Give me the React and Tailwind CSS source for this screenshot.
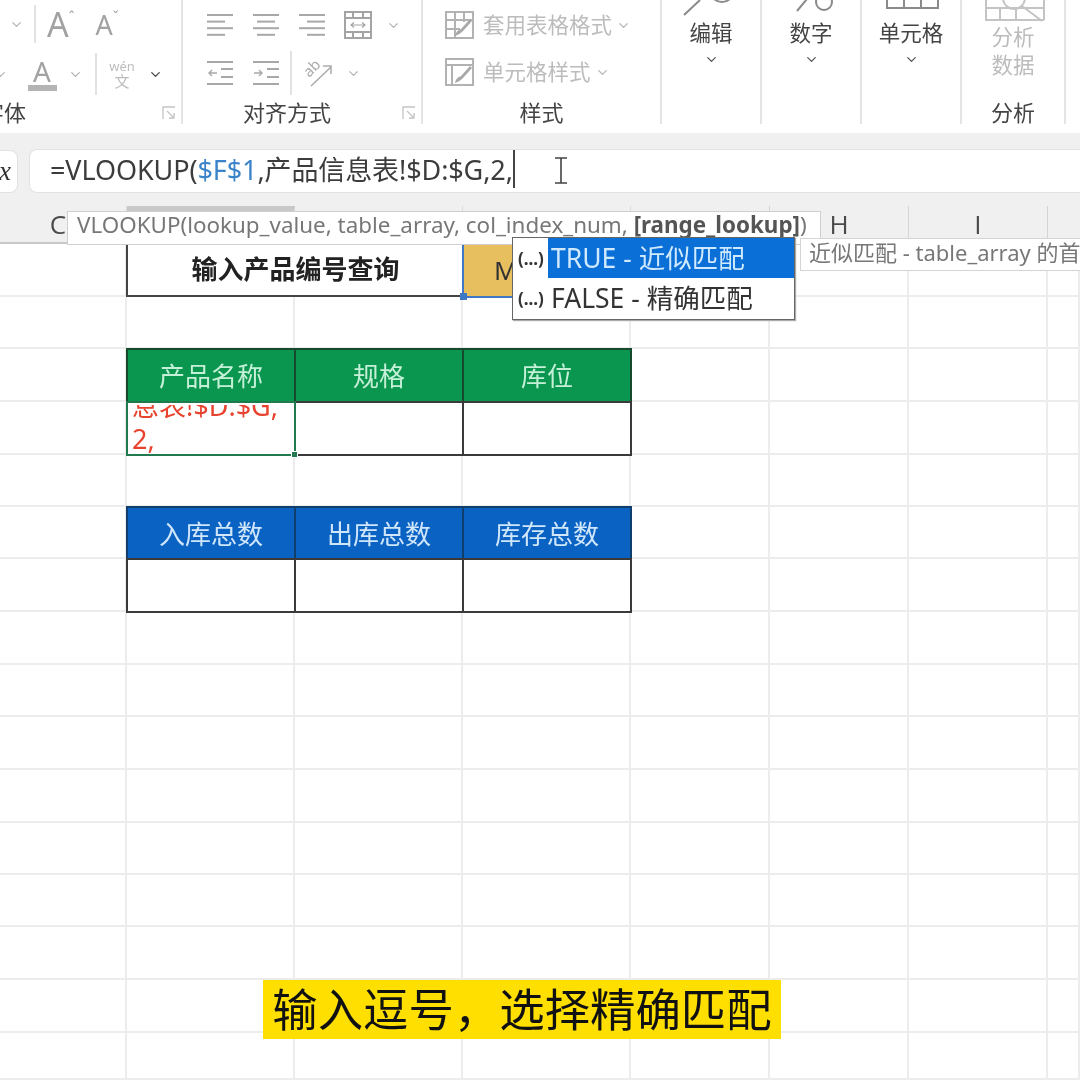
import { ChevronDown } from 'lucide-react'

// Excel window cropped mid-formula: ribbon, formula bar, sheet grid and autocomplete popups.

const GRID_COLS = 'grid grid-cols-[127px_168px_168px_168px_139px_139px_139px_32px]'

function Chev({ className = 'text-[#b4b4b4]', size = 15 }) {
  return <ChevronDown size={size} strokeWidth={2} className={`shrink-0 ${className}`} />
}

function Sep({ className = '' }) {
  return <div className={`w-[2px] shrink-0 bg-[#e2e2e2] ${className}`} />
}

function AlignIcon({ align }) {
  const rows = [26, 18, 26, 18]
  return (
    <svg width="26" height="24" viewBox="0 0 26 24" className="shrink-0">
      {rows.map((w, i) => {
        const x = align === 'left' ? 0 : align === 'right' ? 26 - w : (26 - w) / 2
        return <rect key={i} x={x} y={1 + i * 6.6} width={w} height="2" fill="#a8a8a8" />
      })}
    </svg>
  )
}

function IndentIcon({ flip }) {
  return (
    <svg width="26" height="26" viewBox="0 0 26 26" className="shrink-0" fill="none" stroke="#a8a8a8" strokeWidth="2">
      <path d="M0 2h26M0 24h26M14 9h12M14 17h12" />
      {flip ? <path d="M1 13h8M6 10l3 3-3 3" strokeWidth="1.4" /> : <path d="M10 13H2M5 10l-3 3 3 3" strokeWidth="1.4" />}
    </svg>
  )
}

function MergeIcon() {
  return (
    <svg width="28" height="28" viewBox="0 0 28 28" className="shrink-0" fill="none" stroke="#a4a4a4" strokeWidth="2">
      <rect x="1" y="1" width="26" height="26" />
      <path d="M1 7h26M1 21h26M9 1v6M19 1v6M9 21v6M19 21v6" />
      <path d="M7 14h14M10 11.5 7 14l3 2.500M18 11.500l3 2.500-3 2.500" strokeWidth="1.2" />
    </svg>
  )
}

function StyleIcon({ header }) {
  return (
    <svg width="29" height="28" viewBox="0 0 29 28" className="shrink-0" fill="none" stroke="#b2b2b2" strokeWidth="2">
      <rect x="1" y="1" width="27" height="26" />
      {header && <path d="M1 9h27M1 18h14M10 1v26M19 1v10" />}
      {!header && <path d="M1 7h27M7 7v20" />}
      <path d="M10 25c1-5 4-6 6-7l9-10 2 2-9 10c-2 2-5 4-8 5z" fill="#a8a8a8" stroke="none" />
    </svg>
  )
}

function Launcher() {
  return (
    <svg width="14" height="14" viewBox="0 0 14 14" className="shrink-0" fill="none" stroke="#c4c4c4" strokeWidth="1.300">
      <path d="M1 13V1h12M5 5l7 7M12 7v5H7" />
    </svg>
  )
}

function Group({ width, label, launcher, labelClass = '', children }) {
  return (
    <div className={`flex h-[124px] shrink-0 flex-col border-r-2 border-[#e4e4e4] ${width}`}>
      <div className="h-[100px] shrink-0">{children}</div>
      <div className={`relative flex h-[24px] items-center justify-center text-[22px] leading-[24px] text-[#444] ${labelClass}`}>
        {label}
        {launcher && (
          <span className="absolute right-[5px] top-[6px]">
            <Launcher />
          </span>
        )}
      </div>
    </div>
  )
}

function FontGroup() {
  return (
    <div className="flex h-[124px] w-[183px] shrink-0 flex-col border-r-2 border-[#e4e4e4]">
      <div className="flex h-[48px] items-center pl-[9px]">
        <Chev />
        <Sep className="ml-[10px] h-[38px]" />
        <span className="ml-[11px] text-[34px] leading-none text-[#a2a2a2]">A</span>
        <span className="-mt-[14px] text-[14px] leading-none text-[#a2a2a2]">ˆ</span>
        <span className="ml-[21px] text-[27px] leading-none text-[#a2a2a2]">A</span>
        <span className="-mt-[14px] text-[14px] leading-none text-[#a2a2a2]">ˇ</span>
      </div>
      <div className="flex h-[52px] items-center">
        <span className="-ml-[7px]"><Chev /></span>
        <div className="ml-[19px] flex w-[30px] flex-col items-center">
          <span className="text-[28px] leading-[27px] text-[#a2a2a2]">A</span>
          <div className="h-[6px] w-[29px] bg-[#b4b4b4]" />
        </div>
        <span className="ml-[11px]"><Chev /></span>
        <Sep className="ml-[12px] h-[42px]" />
        <div className="ml-[11px] flex w-[28px] flex-col items-center text-[#bdbdbd]">
          <span className="text-[13px] leading-[14px]">wén</span>
          <span className="text-[15px] leading-[16px]">文</span>
        </div>
        <span className="ml-[12px]"><Chev className="text-[#444]" /></span>
      </div>
      <div className="relative flex h-[24px] items-center text-[22px] leading-[24px] text-[#444]">
        <span className="-ml-[18px] whitespace-nowrap">字体</span>
        <span className="absolute right-[5px] top-[6px]">
          <Launcher />
        </span>
      </div>
    </div>
  )
}

function AlignGroup() {
  return (
    <Group width="w-[240px]" label="对齐方式" labelClass="pr-[30px]" launcher>
      <div className="flex h-[50px] items-center pl-[24px]">
        <AlignIcon align="left" />
        <span className="ml-[20px]"><AlignIcon align="center" /></span>
        <span className="ml-[20px]"><AlignIcon align="right" /></span>
        <span className="ml-[19px]"><MergeIcon /></span>
        <span className="ml-[14px]"><Chev /></span>
      </div>
      <div className="flex h-[46px] items-center pl-[24px]">
        <IndentIcon />
        <span className="ml-[20px]"><IndentIcon flip /></span>
        <Sep className="ml-[11px] h-[44px]" />
        <svg width="32" height="32" viewBox="0 0 32 32" className="ml-[10px] shrink-0" fill="none" stroke="#aaa" strokeWidth="1.500">
          <text x="3" y="17" transform="rotate(-45 10 14)" fontSize="15" fill="#aaa" stroke="none">ab</text>
          <path d="M9 29 29 10M21 9h8v8" />
        </svg>
        <span className="ml-[12px]"><Chev /></span>
      </div>
    </Group>
  )
}

function StylesGroup() {
  return (
    <Group width="w-[239px]" label="样式">
      <div className="flex h-[50px] items-center pl-[22px] text-[21.5px] text-[#bcbcbc]">
        <StyleIcon header />
        <span className="ml-[9px] whitespace-nowrap">套用表格格式</span>
        <span className="ml-[4px]"><Chev /></span>
      </div>
      <div className="flex h-[44px] items-center pl-[22px] text-[21.5px] text-[#bcbcbc]">
        <StyleIcon />
        <span className="ml-[9px] whitespace-nowrap">单元格样式</span>
        <span className="ml-[4px]"><Chev /></span>
      </div>
    </Group>
  )
}

function BigButton({ width, icon, text }) {
  return (
    <Group width={width} label="">
      <div className="relative flex h-full flex-col items-center">
        <div className="h-[20px] w-full shrink-0">{icon}</div>
        <span className="whitespace-nowrap text-[21.5px] leading-[26px] text-[#444]">{text}</span>
        <span className="mt-[6px]"><Chev className="text-[#555]" /></span>
      </div>
    </Group>
  )
}

function Ribbon() {
  return (
    <div className="flex h-[133px] shrink-0 items-start overflow-hidden bg-white">
      <FontGroup />
      <AlignGroup />
      <StylesGroup />
      <BigButton
        width="w-[100px]"
        text="编辑"
        icon={
          <svg width="100" height="20" viewBox="0 0 100 20" fill="none" stroke="#8a8a8a" strokeWidth="2">
            <path d="M22 15 38 0" />
            <circle cx="60" cy="-10" r="12" />
          </svg>
        }
      />
      <BigButton
        width="w-[100px]"
        text="数字"
        icon={
          <svg width="100" height="20" viewBox="0 0 100 20" fill="none" stroke="#8a8a8a" strokeWidth="2">
            <path d="M35 11 45 -1" />
            <circle cx="62" cy="2" r="8" />
          </svg>
        }
      />
      <BigButton
        width="w-[100px]"
        text="单元格"
        icon={
          <svg width="100" height="20" viewBox="0 0 100 20" fill="none" stroke="#8a8a8a" strokeWidth="2">
            <path d="M25 0v8h51V0M42 0v8M59 0v8" />
          </svg>
        }
      />
      <div className="flex h-[124px] w-[104px] shrink-0 flex-col items-center border-r-2 border-[#e4e4e4]">
        <svg width="102" height="24" viewBox="0 0 102 24" className="shrink-0" fill="none" stroke="#c4c4c4" strokeWidth="2">
          <path d="M24 0v20h58M24 8h58M38 8v12M54 8v12M82 0v20" />
          <circle cx="52" cy="-2" r="11" />
          <path d="M60 6 80 21" />
        </svg>
        <div className="mt-[-1px] h-[77px] text-center text-[21.5px] leading-[28px] text-[#bcbcbc]">
          分析
          <br />
          数据
        </div>
        <div className="text-[22px] leading-[24px] text-[#444]">分析</div>
      </div>
    </div>
  )
}

function FormulaBar() {
  return (
    <div className="flex h-[60px] shrink-0 items-end gap-[11px] bg-[#f0f0f0]">
      <div className="flex h-[43px] w-[18px] items-center justify-end overflow-hidden rounded-r-lg border border-l-0 border-[#e2e2e2] bg-white pr-[6px] [font-family:'Liberation_Serif',serif] text-[27px] italic text-[#333]">
        x
      </div>
      <div className="flex h-[44px] flex-1 items-center whitespace-nowrap rounded-l-lg border border-r-0 border-[#e2e2e2] bg-white pb-[4px] pl-[20px] text-[27px] leading-none tracking-[-0.1px] text-[#3c3c3c]">
        =VLOOKUP(<span className="text-[#3a83c8]">$F$1</span>,产品信息表!$D:$G,2,
        <span className="inline-block h-[38px] w-[2px] bg-[#444]" />
      </div>
    </div>
  )
}

function ColumnHeader() {
  return (
    <div className="shrink-0 bg-[#f0f0f0] pt-[13px]">
      <div className={`${GRID_COLS} h-[38px] border-b-2 border-[#c8c8c8] [font-family:'Open_Sans',sans-serif] text-[26px] leading-none text-[#4a4a4a]`}>
        <div className="flex items-center justify-center border-r border-[#dcdcdc] pr-[10px]">C</div>
        <div className="border-t-[5px] border-r border-[#c8c8c8] border-r-[#dcdcdc] bg-[#e4e4e4]" />
        <div className="border-r border-[#dcdcdc]" />
        <div className="border-r border-[#dcdcdc]" />
        <div className="border-r border-[#d4d4d4]" />
        <div className="flex items-center justify-center border-r border-[#d4d4d4]">H</div>
        <div className="flex items-center justify-center border-r border-[#d4d4d4]">I</div>
        <div />
      </div>
    </div>
  )
}

function Blank() {
  return <div className="border-r-2 border-b-2 border-[#ececec]" />
}

function DataCell({ tone = 'white', children }) {
  const tones = {
    white: 'border-[#3a3a3a] bg-white',
    green: 'border-[#17492f] bg-[#0b964f] pt-[2px] text-[#c5f0d8]',
    blue: 'border-[#123e6e] bg-[#0a62c2] pt-[2px] text-[#cfe6fb]',
  }
  return (
    <div className={`relative -m-px flex items-center justify-center border-2 text-[26px] ${tones[tone]}`}>
      {children}
    </div>
  )
}

function Blanks({ count }) {
  return Array.from({ length: count }, (_, i) => <Blank key={i} />)
}

function Sheet() {
  return (
    <div className={`${GRID_COLS} flex-1 grid-rows-[53px_52px_53px_53px_52px_52px_53px_53px_52px_53px_53px_52px_52px_53px_53px_47px] bg-white`}>
      {/* row 1: lookup input */}
      <Blank />
      <div className="relative col-span-2 -ml-px flex items-center justify-center border-b-2 border-l-2 border-[#444] text-[26px] font-bold text-[#222]">
        输入产品编号查询
      </div>
      <div className="relative -ml-px -mb-px flex items-center border-x-2 border-b-2 border-[#3f78c4] bg-[#e8bf5f] pl-[30px] text-[26px] text-[#333]">
        M
        <div className="absolute -bottom-[4px] -left-[4px] h-[7px] w-[7px] bg-[#3f78c4]" />
      </div>
      <Blanks count={4} />

      <Blanks count={8} />

      {/* row 3: green header */}
      <Blank />
      <DataCell tone="green">产品名称</DataCell>
      <DataCell tone="green">规格</DataCell>
      <DataCell tone="green">库位</DataCell>
      <Blanks count={4} />

      {/* row 4: active cell in edit mode */}
      <Blank />
      <div className="relative z-10 -m-px flex flex-col justify-end overflow-visible border-2 border-[#217a4f] bg-white">
        <div className="h-[49px] overflow-hidden">
          <div className="-mt-[16px] whitespace-nowrap pl-[4px] text-[27px] leading-[33px] text-[#e8432e]">
            息表!$D:$G,
            <br />
            2,
          </div>
        </div>
        <div className="absolute -bottom-[4px] -right-[4px] h-[7px] w-[7px] border border-white bg-[#217a4f]" />
      </div>
      <DataCell />
      <DataCell />
      <Blanks count={4} />

      <Blanks count={8} />

      {/* row 6-7: blue totals */}
      <Blank />
      <DataCell tone="blue">入库总数</DataCell>
      <DataCell tone="blue">出库总数</DataCell>
      <DataCell tone="blue">库存总数</DataCell>
      <Blanks count={4} />

      <Blank />
      <DataCell />
      <DataCell />
      <DataCell />
      <Blanks count={4} />

      <Blanks count={72} />
    </div>
  )
}

function Popups() {
  return (
    <>
      {/* function signature hint */}
      <div className="absolute left-[67px] top-[211px] flex h-[34px] w-[754px] items-center whitespace-nowrap border border-[#cfcfcf] bg-white pb-[5px] pl-[9px] text-[22.4px] leading-none text-[#777]">
        VLOOKUP(lookup_value, table_array, col_index_num,&nbsp;<b className="text-[#555]">[range_lookup]</b>)
      </div>

      {/* autocomplete list */}
      <div className="absolute left-[512px] top-[237px] flex h-[83px] w-[283px] flex-col border border-[#666] bg-white text-[26.5px] leading-none text-[#333] shadow-[1px_1px_1px_#aaa]">
        <div className="flex h-[40px] items-center">
          <span className="w-[35px] shrink-0 pl-[5px] text-[17px] font-bold">(...)</span>
          <span className="flex h-full flex-1 items-center whitespace-nowrap bg-[#0a6fd6] pl-[3px] text-[#cfe9ff]">TRUE - 近似匹配</span>
        </div>
        <div className="flex flex-1 items-center">
          <span className="w-[35px] shrink-0 pl-[5px] text-[17px] font-bold">(...)</span>
          <span className="whitespace-nowrap pl-[3px]">FALSE - 精确匹配</span>
        </div>
      </div>

      {/* description of the highlighted item */}
      <div className="absolute left-[800px] top-[238px] flex h-[33px] w-[320px] items-center whitespace-nowrap border border-[#d4d4d4] bg-white pb-[5px] pl-[8px] text-[22px] leading-none text-[#777]">
        近似匹配 - table_array 的首列必须按升序排序
      </div>

      {/* mouse cursor */}
      <svg width="14" height="28" viewBox="0 0 14 28" className="absolute left-[554px] top-[157px]" fill="none" stroke="#444" strokeWidth="1.600">
        <path d="M1 1h12M1 26h12M7 1v25" />
      </svg>

      {/* subtitle */}
      <div className="absolute left-[263px] top-[980px] flex h-[59px] w-[518px] items-center justify-center bg-[#ffdf00] text-[45.4px] leading-none text-[#111]">
        输入逗号，选择精确匹配
      </div>
    </>
  )
}

export default function App() {
  return (
    <div className="relative flex h-[1080px] w-[1080px] flex-col overflow-hidden bg-white blur-[0.5px] [font-family:'Noto_Sans','Noto_Sans_CJK_SC',sans-serif]">
      <Ribbon />
      <FormulaBar />
      <ColumnHeader />
      <Sheet />
      <Popups />
    </div>
  )
}
